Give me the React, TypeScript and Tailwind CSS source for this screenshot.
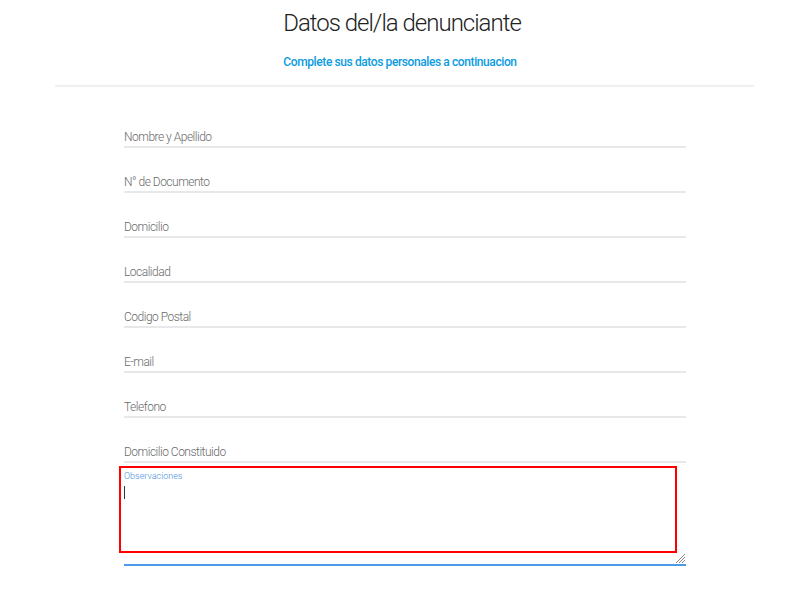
import React from "react";

const fields = [
  "Nombre y Apellido",
  "N° de Documento",
  "Domicilio",
  "Localidad",
  "Codigo Postal",
  "E-mail",
  "Telefono",
  "Domicilio Constituido",
];

export default function App() {
  return (
    <div
      className="w-[800px] h-[600px] bg-white overflow-hidden"
      style={{ fontFamily: "Roboto, 'Noto Sans', sans-serif" }}
    >
      <div className="flex flex-col items-center pt-[8px]">
        <h1 className="text-[24px] leading-[30px] font-light text-[#222] tracking-[-1px] pl-[4px]">
          Datos del/la denunciante
        </h1>
        <p className="mt-[16px] text-[12px] leading-[16px] font-medium text-[#0a9be0] tracking-[-0.4px]">
          Complete sus datos personales a continuacion
        </p>
      </div>
      <div className="ml-[55px] w-[699px] mt-[15px] h-[2px] bg-[#f0f0f0]" />
      <form className="ml-[124px] w-[562px] mt-[16px] flex flex-col">
        {fields.map((f) => (
          <div
            key={f}
            className="h-[45px] flex items-end border-b-[2px] border-[#e6e8ea]"
          >
            <span className="text-[12px] leading-[16px] font-light text-[#6a6a6a] tracking-[-0.5px] pb-[1px]">
              {f}
            </span>
          </div>
        ))}
        <div className="-ml-[5px] mt-[3px] w-[558px] h-[87px] border-2 border-[#ff0000] pl-[3px] pt-[2px] flex flex-col">
          <span className="text-[9px] leading-[12px] font-light text-[#4a90e2]">
            Observaciones
          </span>
          <span className="mt-[4px] w-[1px] h-[13px] bg-[#333]" />
        </div>
        <div className="flex justify-end h-[11px] pr-[1px]">
          <svg width="10" height="10" viewBox="0 0 10 10">
            <line x1="10" y1="1" x2="1" y2="10" stroke="#888" strokeWidth="1" />
            <line x1="10" y1="4" x2="4" y2="10" stroke="#888" strokeWidth="1" />
            <line x1="10" y1="7" x2="7" y2="10" stroke="#888" strokeWidth="1" />
          </svg>
        </div>
        <div className="h-[2px] bg-[#4a9be8]" />
      </form>
    </div>
  );
}
